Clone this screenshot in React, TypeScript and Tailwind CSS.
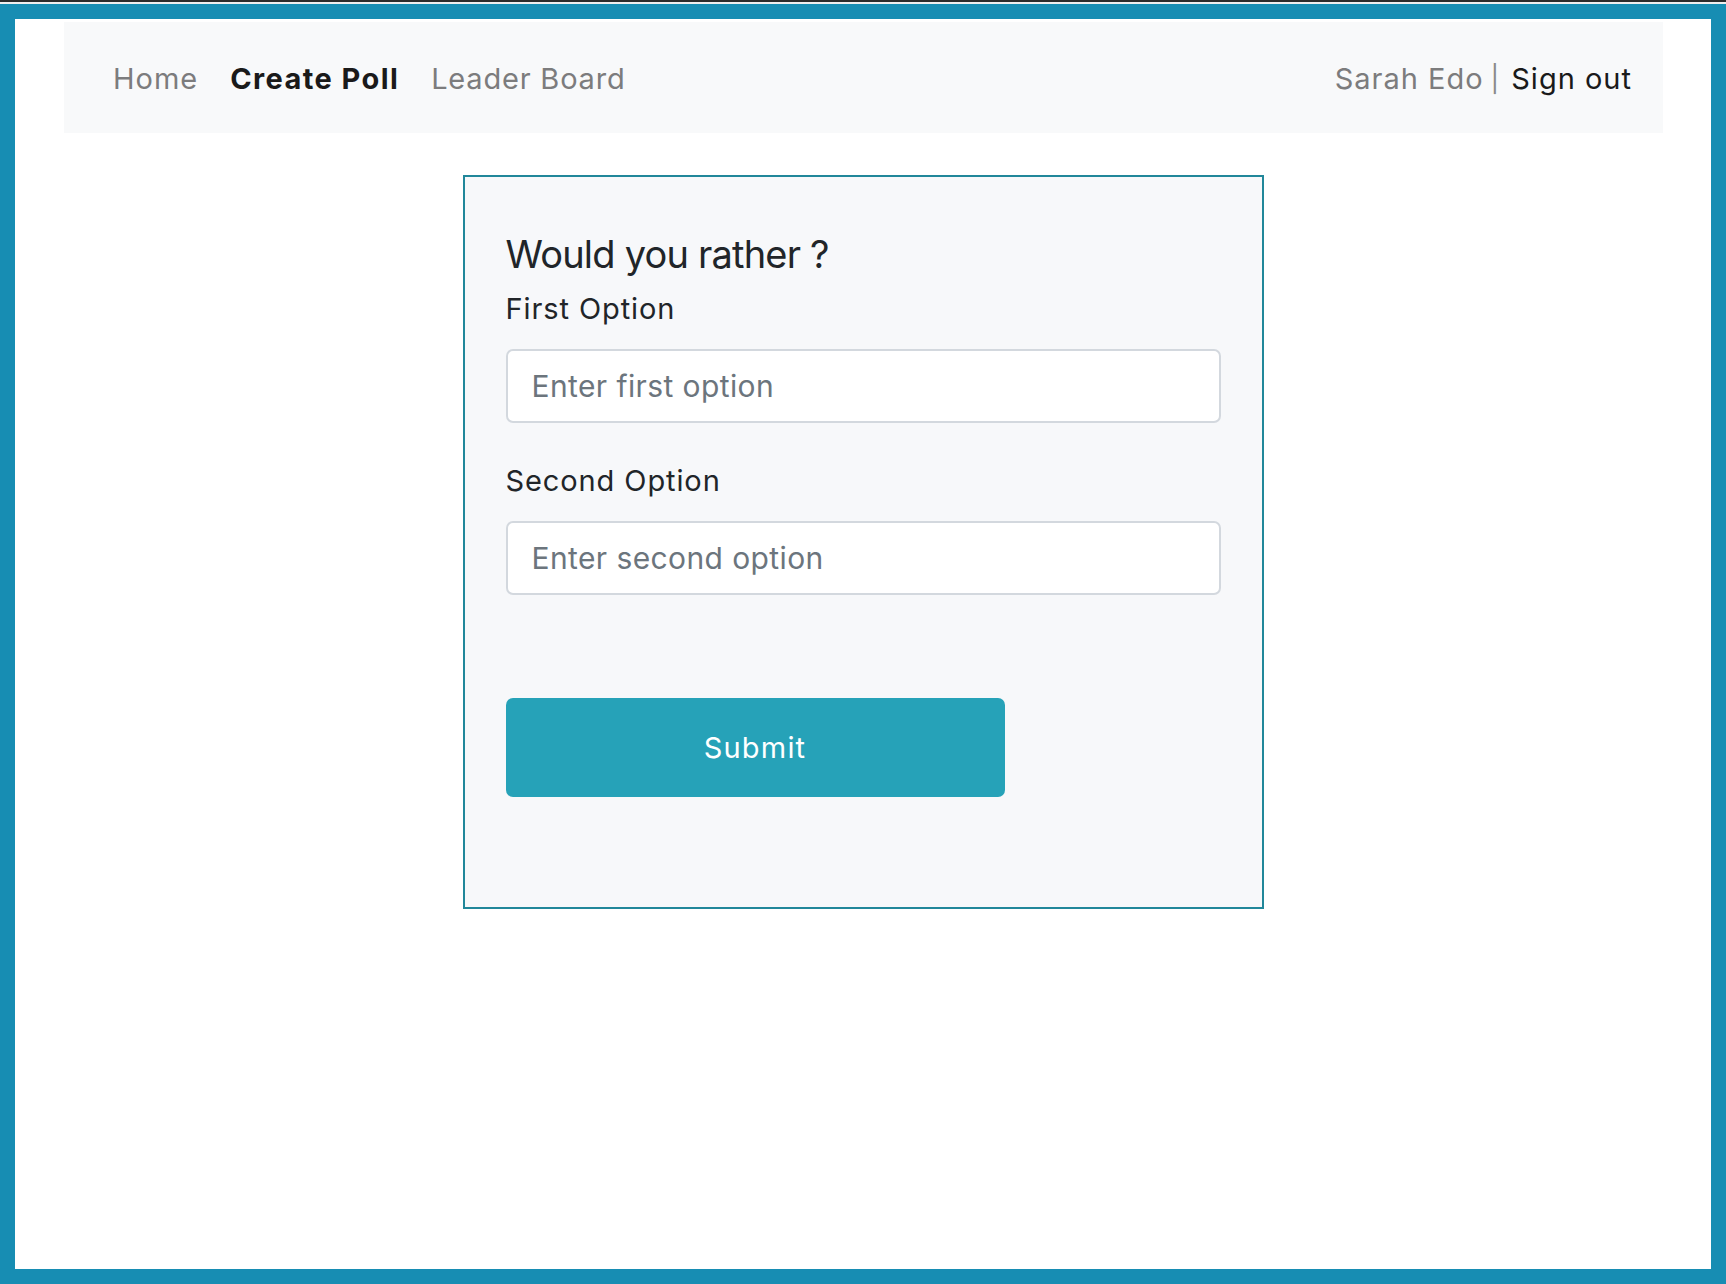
import React from 'react'

const NavBar = () => {
  return (
    <nav className="ml-[49px] mr-[48px] mt-[3px] h-[111px] bg-[#f8f9fa] flex items-center justify-between pl-[49px] pr-[31px] pt-[2px] text-[29px] tracking-[1px]">
      <div className="flex items-center gap-[32px]">
        <a className="text-[#7c7c7d]">Home</a>
        <a className="font-bold tracking-[1.4px] text-[#1a1a1a]">Create Poll</a>
        <a className="text-[#7c7c7d] tracking-[0.8px]">Leader Board</a>
      </div>
      <div className="flex items-center">
        <span className="text-[#7c7c7d]">Sarah Edo</span>
        <span className="text-[#8a8a8a] pl-[7px] pr-[11px] text-[26px]">|</span>
        <a className="text-[#1a1a1a]">Sign out</a>
      </div>
    </nav>
  )
}

const App = () => {
  return (
    <div className="h-[1284px] flex flex-col bg-white" style={{ fontFamily: 'Inter, "Noto Sans", sans-serif' }}>
      <div className="h-[2px] bg-[#2b2b2b]" />
      <div className="h-[2px] bg-[#eeeeee]" />
      <div className="flex-1 border-[15px] border-[#178db3] bg-white">
        <NavBar />

        {/* POLL FORM */}
        <div className="mx-auto mt-[42px] w-[801px] border-2 border-[#21879a] bg-[#f7f8fa] px-[41px] pt-[53px] pb-[110px] text-[#212529]">
          <h3 className="text-[38px] leading-[48px] tracking-[-0.8px]">Would you rather ?</h3>
          <label className="block mt-[13px] text-[29px] leading-[36px] tracking-[0.9px]">First Option</label>
          <input
            placeholder="Enter first option"
            className="mt-[22px] block w-full h-[74px] bg-white border-2 border-[#d3d8de] rounded-[7px] pl-[24px] text-[30px] tracking-[0.4px] placeholder:text-[#6c757d] outline-none"
          />
          <label className="block mt-[40px] text-[29px] leading-[36px] tracking-[0.9px]">Second Option</label>
          <input
            placeholder="Enter second option"
            className="mt-[22px] block w-full h-[74px] bg-white border-2 border-[#d3d8de] rounded-[7px] pl-[24px] text-[30px] tracking-[0.4px] placeholder:text-[#6c757d] outline-none"
          />
          <button className="mt-[103px] block w-[499px] h-[99px] bg-[#26a2b8] rounded-[7px] text-white text-[29px] tracking-[1.2px]">
            Submit
          </button>
        </div>
      </div>
    </div>
  )
}

export default App
